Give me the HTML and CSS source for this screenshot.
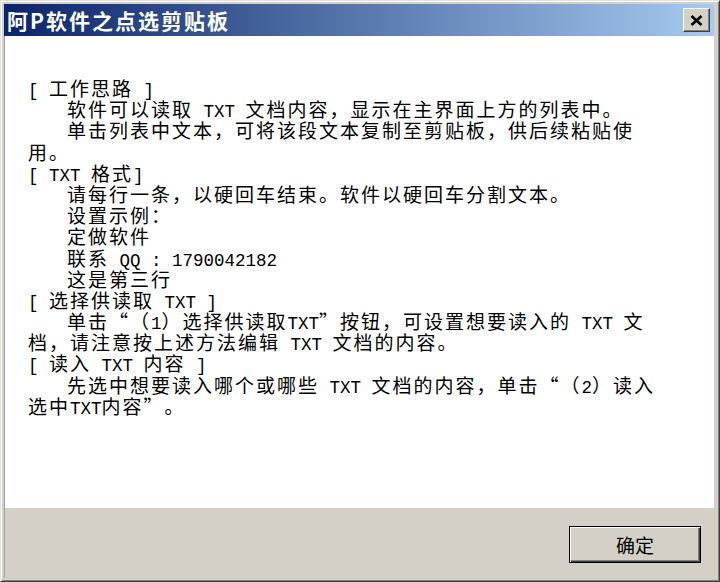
FILE: index.html
```html
<!DOCTYPE html>
<html lang="zh-CN">
  <head>
    <meta charset="utf-8">
    <title>阿P软件之点选剪贴板</title>
    <link rel="stylesheet" href="styles.css">
  </head>
  <body>
    <div class="window">
      <div class="titlebar">
        <span class="title">阿P软件之点选剪贴板</span>
        <span class="close">
          <svg width="13" height="11" viewBox="0 0 13 11">
            <path d="M1.5 1 L11.5 10 M11.5 1 L1.5 10" stroke="#000" stroke-width="2.6" fill="none"/>
          </svg>
        </span>
      </div>

      <div class="content">
        <div class="line"><span class="en">[ </span>工作思路<span class="en"> ]</span></div>
        <div class="line ind">软件可以读取<span class="en"> TXT </span>文档内容，显示在主界面上方的列表中。</div>
        <div class="line ind">单击列表中文本，可将该段文本复制至剪贴板，供后续粘贴使</div>
        <div class="line">用。</div>
        <div class="line"><span class="en">[ TXT </span>格式<span class="en">]</span></div>
        <div class="line ind">请每行一条，以硬回车结束。软件以硬回车分割文本。</div>
        <div class="line ind">设置示例：</div>
        <div class="line ind">定做软件</div>
        <div class="line ind">联系<span class="en"> QQ : 1790042182</span></div>
        <div class="line ind">这是第三行</div>
        <div class="line"><span class="en">[ </span>选择供读取<span class="en"> TXT ]</span></div>
        <div class="line ind">单击“（<span class="en">1</span>）选择供读取<span class="en">TXT</span>”按钮，可设置想要读入的<span class="en"> TXT </span>文</div>
        <div class="line">档，请注意按上述方法编辑<span class="en"> TXT </span>文档的内容。</div>
        <div class="line"><span class="en">[ </span>读入<span class="en"> TXT </span>内容<span class="en"> ]</span></div>
        <div class="line ind">先选中想要读入哪个或哪些<span class="en"> TXT </span>文档的内容，单击“（<span class="en">2</span>）读入</div>
        <div class="line">选中<span class="en">TXT</span>内容”。</div>
      </div>

      <div class="footer">
        <button class="ok">确定</button>
      </div>
    </div>
  </body>
</html>
```

FILE: styles.css
```css
* { box-sizing: border-box; }

body {
  margin: 0;
  font-family: "Noto Sans CJK SC", sans-serif;
  color: #000;
}

.window {
  width: 720px;
  height: 582px;
  display: flex;
  flex-direction: column;
  background: #d4d0c8;
  border: 1px solid;
  border-color: #e4e2dc #404040 #404040 #e4e2dc;
  box-shadow: inset 1px 1px #fff, inset -1px -1px #808080;
  padding: 3px 5px 3px 3px;
}

.titlebar {
  flex: none;
  height: 32px;
  display: flex;
  align-items: center;
  padding: 0 4px 0 3px;
  background: linear-gradient(to right, #0a246a, #a6caf0);
}
.title {
  color: #fff;
  font-weight: 700;
  font-size: 21px;
  letter-spacing: 2px;
}
.close {
  margin-left: auto;
  width: 27px;
  height: 24px;
  display: flex;
  align-items: center;
  justify-content: center;
  background: #d4d0c8;
  border: 1px solid;
  border-color: #fff #404040 #404040 #fff;
  box-shadow: inset -1px -1px #808080;
}

.content {
  flex: 1;
  background: #fff;
  padding: 41px 0 0 23px;
  border-left: 1px solid #a0a0a0;
}
.line {
  height: 21.2px;
  line-height: 21.2px;
  font-size: 19px;
  letter-spacing: 2px;
  white-space: pre;
  text-spacing-trim: space-all;
}
.ind { padding-left: 39px; }
.en {
  font-family: "Liberation Mono", monospace;
  font-size: 17.5px;
  letter-spacing: 0;
}

.footer {
  flex: none;
  height: 70px;
  display: flex;
  justify-content: flex-end;
  align-items: flex-start;
  padding: 18px 13px 0 0;
  border-left: 1px solid #a0a0a0;
}
.ok {
  width: 132px;
  height: 37px;
  padding: 0;
  font-family: "Noto Sans CJK SC", sans-serif;
  font-size: 19px;
  color: #000;
  background: #d4d0c8;
  border: 1px solid #000;
  box-shadow: inset 1px 1px #fff, inset -1px -1px #404040, inset -2px -2px #808080;
}
```
